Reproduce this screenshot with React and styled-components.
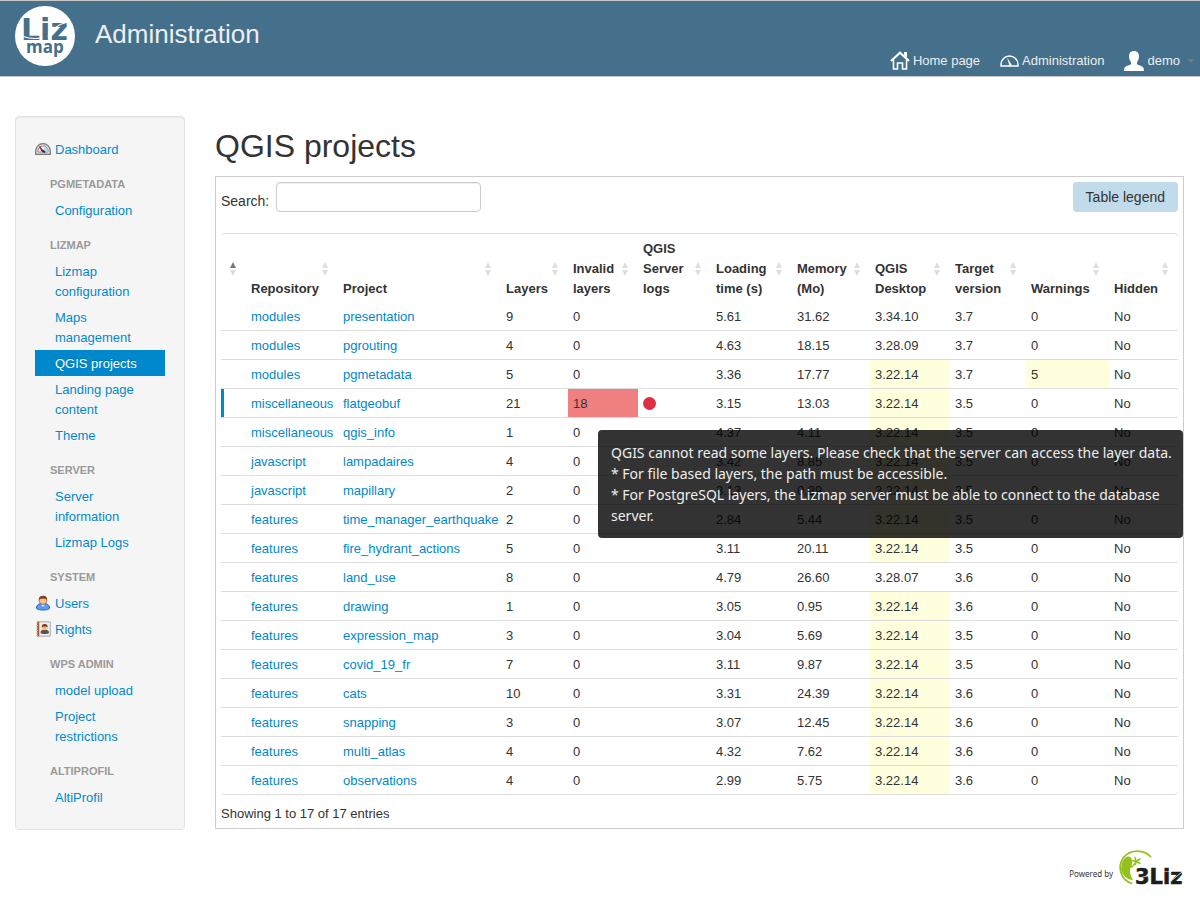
import React from "react";
import styled, { createGlobalStyle, css } from "styled-components";

const GlobalStyle = createGlobalStyle`
  *, *::before, *::after { box-sizing: border-box; }
  body {
    margin: 0;
    background: #fff;
    color: #333;
    font: 13px/20px "Liberation Sans", Arial, sans-serif;
  }
  a { color: #0088cc; text-decoration: none; }
  a:hover { text-decoration: underline; }
`;

/* ---------- Header ---------- */

const Header = styled.header`
  display: flex;
  align-items: flex-start;
  justify-content: space-between;
  height: 77px;
  padding: 5px 5px 0 15px;
  background: #44708b;
  border-top: 1px solid #c8c8c8;
  border-bottom: 1px solid #c8c8c8;
`;

const Brand = styled.div`
  display: flex;
  gap: 20px;
`;

const AppTitle = styled.div`
  padding-top: 12px;
  font-size: 26px;
  line-height: 32px;
  color: #eee;
`;

const TopNav = styled.nav`
  display: flex;
  align-self: flex-end;
  gap: 20px;
  padding-bottom: 5px;
`;

const TopLink = styled.a`
  display: flex;
  align-items: center;
  gap: 3px;
  color: #eee;
  svg { flex: none; }
`;

const Caret = styled.span`
  margin-left: 4px;
  border: 4px solid transparent;
  border-top-color: #777;
  border-bottom: 0;
`;

/* ---------- Page ---------- */

const Page = styled.div`
  display: grid;
  grid-template-columns: 170px minmax(0, 1fr);
  align-items: start;
  gap: 30px;
  padding: 39px 16px 0 15px;
`;

const Sidebar = styled.nav`
  padding: 19px;
  background: #f5f5f5;
  border: 1px solid #e3e3e3;
  border-radius: 4px;
  box-shadow: inset 0 1px 1px rgba(0, 0, 0, 0.05);
`;

const MenuTitle = styled.h2`
  margin: 9px 0 0;
  padding: 3px 15px;
  font-size: 11px;
  line-height: 20px;
  color: #999;
  text-transform: uppercase;
  text-shadow: 0 1px 0 rgba(255, 255, 255, 0.5);
`;

const MenuList = styled.ul`
  margin: 0;
  padding: 0;
  list-style: none;
`;

const MenuLink = styled.a`
  display: flex;
  padding: 4px 15px 2px ${(p) => (p.$icon ? 0 : 20)}px;
  text-shadow: 0 1px 0 rgba(255, 255, 255, 0.5);
  svg { flex: none; margin: 1px 4px 3px 0; }
  ${(p) =>
    p.$active &&
    css`
      color: #fff;
      background: #0088cc;
      text-shadow: 0 -1px 0 rgba(0, 0, 0, 0.2);
    `}
`;

const PageTitle = styled.h1`
  margin: 10px 0;
  font-size: 32px;
  line-height: 40px;
  font-weight: 400;
`;

const Panel = styled.section`
  padding: 5px;
  border: 1px solid #ccc;
`;

const Toolbar = styled.div`
  display: flex;
  justify-content: space-between;
  margin-bottom: 21px;
  font-size: 14px;
`;

const SearchLabel = styled.label`
  display: flex;
  align-items: center;
  gap: 7px;
  span { padding-top: 8px; }
`;

const SearchInput = styled.input`
  width: 205px;
  height: 30px;
  padding: 4px 6px;
  border: 1px solid #ccc;
  border-radius: 4px;
  box-shadow: inset 0 1px 1px rgba(0, 0, 0, 0.075);
  font: inherit;
`;

const LegendButton = styled.button`
  height: 30px;
  padding: 0 13px;
  border: 0;
  border-radius: 4px;
  background: #c2dbea;
  color: #333;
  font: inherit;
`;

/* ---------- Table ---------- */

const Table = styled.table`
  width: 100%;
  table-layout: fixed;
  border-collapse: separate;
  border-spacing: 0;
  border: solid #ddd;
  border-width: 1px 0;
  border-radius: 4px;
`;

const Th = styled.th`
  position: relative;
  padding: 0;
  vertical-align: bottom;
  text-align: left;
`;

const SortButton = styled.button`
  display: block;
  width: 100%;
  padding: 5px 18px 3px 5px;
  border: 0;
  background: none;
  color: #333;
  font: bold 13px/20px "Liberation Sans", Arial, sans-serif;
  text-align: left;
`;

const SortMark = styled.svg`
  position: absolute;
  top: calc(50% - 6px);
  right: 10px;
`;

const toneColors = { warn: "#ffffdd", error: "#f08080" };

const Td = styled.td`
  position: relative;
  height: 29px;
  padding: 5px 5px 3px;
  border-top: 1px solid #ddd;
  white-space: nowrap;
  background: ${(p) => toneColors[p.$tone] || "transparent"};
`;

const Row = styled.tr`
  &:first-child > td { height: 28px; border-top: 0; }
  ${(p) =>
    p.$selected &&
    css`
      > td:first-child { box-shadow: inset 3px 0 0 #0088cc; }
    `}
`;

const LogDot = styled.span`
  display: block;
  width: 13px;
  height: 13px;
  margin-bottom: 2px;
  border-radius: 50%;
  background: #dd2e44;
`;

const Tooltip = styled.div`
  position: absolute;
  z-index: 2;
  top: 41px;
  left: 30px;
  width: 585px;
  padding: 12px 8px 12px 13px;
  border-radius: 4px;
  background: rgba(0, 0, 0, 0.8);
  color: #eee;
  font: 14px/21px "Noto Sans", "Open Sans", sans-serif;
  white-space: pre-line;
`;

const Info = styled.div`
  padding-top: 9px;
  line-height: 19px;
`;

const Footer = styled.footer`
  display: flex;
  justify-content: flex-end;
  align-items: center;
  gap: 6px;
  padding: 20px 15px 0;
`;

const Powered = styled.span`
  padding-top: 8px;
  font: 8px/12px "Noto Sans", sans-serif;
`;

/* ---------- Drawings ---------- */

const LizmapLogo = () => (
  <svg width="60" height="60" viewBox="0 0 60 60" role="img" aria-label="Lizmap">
    <circle cx="30" cy="30" r="30" fill="#fff" />
    <g fill="#44708b" fontWeight="bold">
      <text x="6" y="34" fontSize="30" fontFamily="DejaVu Sans">Liz</text>
      <text x="11" y="47" fontSize="17" fontFamily="Open Sans">map</text>
    </g>
    <path d="M8 30.500 Q17 33.500 26 32 M33 31 Q39 19 53 16" fill="none" stroke="#fff" strokeWidth="1.100" />
  </svg>
);

const HomeIcon = () => (
  <svg width="20" height="20" viewBox="0 0 20 20">
    <path d="M1 10 10 1.800 19 10" fill="none" stroke="#fff" strokeWidth="2.200" />
    <path d="M14 1h3v6l-3-3z" fill="#fff" />
    <path d="M3.500 9v9h4v-6h5v6h4V9" fill="none" stroke="#fff" strokeWidth="1.600" />
  </svg>
);

const GaugeIcon = () => (
  <svg width="19" height="12" viewBox="0 0 19 12">
    <path d="M1 11V9.500a8.500 8.500 0 0 1 17 0V11z" fill="none" stroke="#fff" strokeWidth="1.500" />
    <path d="M7 2.500 11.500 9.500V11H9.500z" fill="#fff" />
  </svg>
);

const UserIcon = () => (
  <svg width="20" height="20" viewBox="0 0 20 20">
    <path
      d="M10 0c3.500 0 5 2.400 5 5.500 0 2.300-.8 4.200-2 5.500v2c0 1 6 1.800 6.600 4.200.3 1 .4 2 .4 2.800H0c0-.8.100-1.800.4-2.800C1 14.800 7 14 7 13v-2C5.800 9.700 5 7.800 5 5.500 5 2.400 6.500 0 10 0z"
      fill="#fff"
    />
  </svg>
);

const DashboardIcon = () => (
  <svg width="16" height="16" viewBox="0 0 16 16">
    <path d="M.7 13.300V10a7.300 7.300 0 0 1 14.600 0v3.300z" fill="#ddd" stroke="#777" strokeWidth="1.200" />
    <path d="M3 11V10a5 5 0 0 1 10 0v1z" fill="#fff" stroke="#888" />
    <path d="M9 5.500 12.500 8v3H9z" fill="#b8d3f5" />
    <path d="M4.500 5.500 8 11" stroke="#d4141c" strokeWidth="1.600" />
    <path d="M7 9l3 2.500" stroke="#333" strokeWidth="2" />
  </svg>
);

const PersonIcon = () => (
  <svg width="16" height="16" viewBox="0 0 16 16">
    <path d="M1.500 13c0-3 2.200-4.500 6.500-4.500s6.500 1.500 6.500 4.500c0 1.500-3 2-6.500 2s-6.500-.5-6.500-2z" fill="#5b9cf0" stroke="#2a62b8" />
    <path d="M6 9.500 8 12l2-2.500" fill="#d9e9ff" />
    <circle cx="8" cy="5.600" r="3.800" fill="#f7c48d" stroke="#96501c" strokeWidth=".7" />
    <path d="M3.800 5.500C3.500 2 5.500.800 8 .800s4.500 1.200 4.200 4.700C11.500 3.700 10 3.800 8 3.800s-3.500-.1-4.200 1.700z" fill="#84451c" />
  </svg>
);

const RightsIcon = () => (
  <svg width="16" height="16" viewBox="0 0 16 16">
    <path d="M4 .800h11.300v14.400H4z" fill="#eee" stroke="#aaa" />
    <path d="M2 .500h2v15H2z" fill="#b8572b" />
    <path d="M1 2h2M1 4.500h2M1 7h2M1 9.500h2M1 12h2M1 14.500h2" stroke="#bbb" />
    <path d="M5.500 11.500c0-2 1.800-2.700 4.200-2.700s4.300.7 4.300 2.700-8.500 2-8.500 0z" fill="#555" />
    <circle cx="9.700" cy="6.500" r="2.700" fill="#f3b77b" />
    <path d="M6.800 6.500c-.3-2.500 1-3.500 2.900-3.500s3.200 1 2.900 3.500c-.6-1.400-5.200-1.400-5.800 0z" fill="#70391a" />
  </svg>
);

const LizLogo = () => (
  <svg width="66" height="40" viewBox="0 0 66 40" role="img" aria-label="3Liz">
    <path d="M32 7C25-.500 12-1 5 7c-7 9-4 23 8 26.500" fill="none" stroke="#95c11f" strokeWidth="1.800" />
    <path d="M3 13C6 5 12 5 13 10c1 5-2 8-2 11 0 4 2 7 3 9C8 30 3 25 2 19z" fill="#95c11f" />
    <path d="M12 17c3-1 3-3 5-5M17 11.500l-3.500-1M17 11.500l-1-4M17 11.500l4-2.500M17 11.500l4 2M17 11.500l-.5 3" fill="none" stroke="#95c11f" strokeWidth="1.500" strokeLinecap="round" />
    <text x="16" y="34" fontFamily="DejaVu Sans" fontWeight="bold" fontSize="21" fill="#1d1d1b" stroke="#1d1d1b" strokeWidth=".6">3Liz</text>
    <path d="M16 29l12-3M52 31l11-9" stroke="#fff" strokeWidth=".8" />
  </svg>
);

/* ---------- Data ---------- */

const menu = [
  { items: [{ label: "Dashboard", Icon: DashboardIcon }] },
  { title: "pgmetadata", items: [{ label: "Configuration" }] },
  {
    title: "Lizmap",
    items: [
      { label: "Lizmap configuration" },
      { label: "Maps management" },
      { label: "QGIS projects", active: true },
      { label: "Landing page content" },
      { label: "Theme" },
    ],
  },
  { title: "Server", items: [{ label: "Server information" }, { label: "Lizmap Logs" }] },
  {
    title: "System",
    items: [
      { label: "Users", Icon: PersonIcon },
      { label: "Rights", Icon: RightsIcon },
    ],
  },
  { title: "WPS Admin", items: [{ label: "model upload" }, { label: "Project restrictions" }] },
  { title: "AltiProfil", items: [{ label: "AltiProfil" }] },
];

const columns = [
  ["", 25],
  ["Repository", 92],
  ["Project", 163],
  ["Layers", 67],
  ["Invalid layers", 70],
  ["QGIS Server logs", 73],
  ["Loading time (s)", 81],
  ["Memory (Mo)", 78],
  ["QGIS Desktop", 80],
  ["Target version", 76],
  ["Warnings", 83],
  ["Hidden", 69],
];

const projects = [
  ["modules", "presentation", 9, 0, "5.61", "31.62", "3.34.10", "3.7", 0],
  ["modules", "pgrouting", 4, 0, "4.63", "18.15", "3.28.09", "3.7", 0],
  ["modules", "pgmetadata", 5, 0, "3.36", "17.77", "3.22.14", "3.7", 5],
  ["miscellaneous", "flatgeobuf", 21, 18, "3.15", "13.03", "3.22.14", "3.5", 0],
  ["miscellaneous", "qgis_info", 1, 0, "4.37", "4.11", "3.22.14", "3.5", 0],
  ["javascript", "lampadaires", 4, 0, "3.42", "8.85", "3.22.14", "3.5", 0],
  ["javascript", "mapillary", 2, 0, "3.13", "0.89", "3.22.14", "3.5", 0],
  ["features", "time_manager_earthquake", 2, 0, "2.84", "5.44", "3.22.14", "3.5", 0],
  ["features", "fire_hydrant_actions", 5, 0, "3.11", "20.11", "3.22.14", "3.5", 0],
  ["features", "land_use", 8, 0, "4.79", "26.60", "3.28.07", "3.6", 0],
  ["features", "drawing", 1, 0, "3.05", "0.95", "3.22.14", "3.6", 0],
  ["features", "expression_map", 3, 0, "3.04", "5.69", "3.22.14", "3.5", 0],
  ["features", "covid_19_fr", 7, 0, "3.11", "9.87", "3.22.14", "3.5", 0],
  ["features", "cats", 10, 0, "3.31", "24.39", "3.22.14", "3.6", 0],
  ["features", "snapping", 3, 0, "3.07", "12.45", "3.22.14", "3.6", 0],
  ["features", "multi_atlas", 4, 0, "4.32", "7.62", "3.22.14", "3.6", 0],
  ["features", "observations", 4, 0, "2.99", "5.75", "3.22.14", "3.6", 0],
];

const tooltipText = `QGIS cannot read some layers. Please check that the server can access the layer data.
* For file based layers, the path must be accessible.
* For PostgreSQL layers, the Lizmap server must be able to connect to the database server.`;

/* ---------- Parts ---------- */

const Menu = () => (
  <Sidebar>
    {menu.map(({ title, items }) => (
      <React.Fragment key={title || "top"}>
        {title && <MenuTitle>{title}</MenuTitle>}
        <MenuList>
          {items.map(({ label, Icon, active }) => (
            <li key={label}>
              <MenuLink href="#" $icon={!!Icon} $active={active}>
                {Icon && <Icon />}
                {label}
              </MenuLink>
            </li>
          ))}
        </MenuList>
      </React.Fragment>
    ))}
  </Sidebar>
);

const HeaderCell = ({ label, sorted }) => (
  <Th>
    <SortButton type="button" aria-label={label || "Status"}>{label}</SortButton>
    <SortMark width="6" height="14" viewBox="0 0 6 14">
      <path d="M3 0 6 6H0z" fill={sorted ? "#777" : "#ddd"} />
      <path d="M0 8h6L3 14z" fill="#ddd" />
    </SortMark>
  </Th>
);

const ProjectRow = ({ data }) => {
  const [repo, name, layers, invalid, time, memory, desktop, target, warnings] = data;
  return (
    <Row $selected={invalid > 0}>
      <Td />
      <Td><a href="#">{repo}</a></Td>
      <Td><a href="#">{name}</a></Td>
      <Td>{layers}</Td>
      <Td $tone={invalid > 0 ? "error" : undefined}>
        {invalid}
        {invalid > 0 && <Tooltip role="tooltip">{tooltipText}</Tooltip>}
      </Td>
      <Td>{invalid > 0 && <LogDot />}</Td>
      <Td>{time}</Td>
      <Td>{memory}</Td>
      <Td $tone={desktop === "3.22.14" ? "warn" : undefined}>{desktop}</Td>
      <Td>{target}</Td>
      <Td $tone={warnings > 0 ? "warn" : undefined}>{warnings}</Td>
      <Td>No</Td>
    </Row>
  );
};

export default function App() {
  return (
    <>
      <GlobalStyle />
      <Header>
        <Brand>
          <LizmapLogo />
          <AppTitle>Administration</AppTitle>
        </Brand>
        <TopNav>
          <TopLink href="#"><HomeIcon />Home page</TopLink>
          <TopLink href="#"><GaugeIcon />Administration</TopLink>
          <TopLink href="#"><UserIcon />demo<Caret /></TopLink>
        </TopNav>
      </Header>
      <Page>
        <Menu />
        <main>
          <PageTitle>QGIS projects</PageTitle>
          <Panel>
            <Toolbar>
              <SearchLabel>
                <span>Search:</span>
                <SearchInput type="search" />
              </SearchLabel>
              <LegendButton type="button">Table legend</LegendButton>
            </Toolbar>
            <Table>
              <colgroup>
                {columns.map(([label, width]) => <col key={label} width={width} />)}
              </colgroup>
              <thead>
                <tr>
                  {columns.map(([label], i) => <HeaderCell key={label} label={label} sorted={i === 0} />)}
                </tr>
              </thead>
              <tbody>
                {projects.map((p) => <ProjectRow key={p[1]} data={p} />)}
              </tbody>
            </Table>
            <Info>Showing 1 to 17 of 17 entries</Info>
          </Panel>
        </main>
      </Page>
      <Footer>
        <Powered>Powered by</Powered>
        <LizLogo />
      </Footer>
    </>
  );
}
